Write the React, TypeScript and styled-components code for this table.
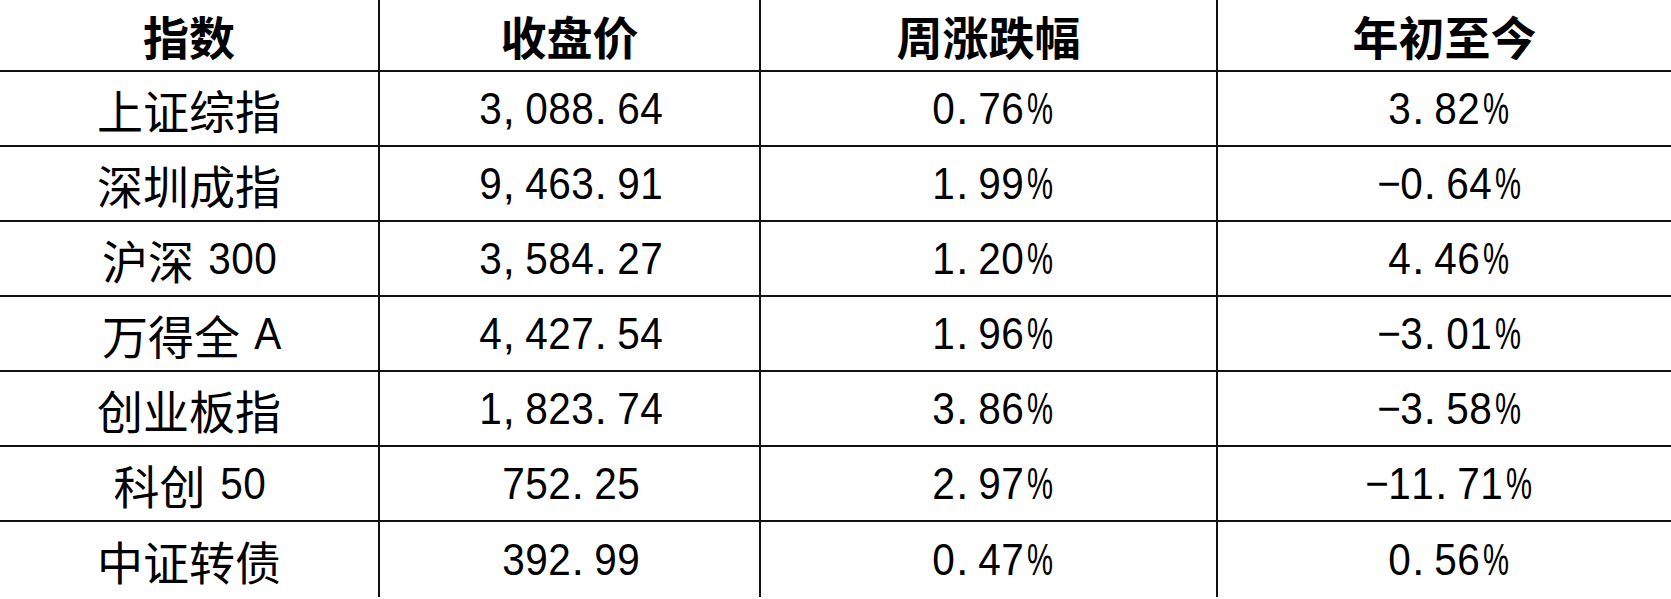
import React from 'react';
import styled, { createGlobalStyle } from 'styled-components';

const GlobalStyle = createGlobalStyle`
  html, body {
    margin: 0;
    padding: 0;
    background: #fff;
  }
  body {
    font-family: 'Noto Sans CJK SC', 'Noto Sans', sans-serif;
    color: #000;
  }
`;

const Table = styled.div`
  display: grid;
  grid-template-columns: 380px 381px 457px 1fr;
  grid-template-rows: 72px repeat(7, 75px);
  width: 1671px;
`;

interface CellProps {
  $head?: boolean;
  $lastCol?: boolean;
  $lastRow?: boolean;
}

const Cell = styled.div<CellProps>`
  display: flex;
  align-items: center;
  justify-content: center;
  box-sizing: border-box;
  border-right: ${(p) => (p.$lastCol ? 'none' : '2px solid #111')};
  border-bottom: ${(p) => (p.$lastRow ? 'none' : '2px solid #111')};
  font-size: 46px;
  font-weight: ${(p) => (p.$head ? 700 : 400)};
  line-height: 1;
  white-space: nowrap;
`;

const Han = styled.span`
  display: inline-block;
  width: 46px;
  text-align: center;
`;

type HalfKind = 'digit' | 'punct' | 'pct' | 'space';

const Half = styled.span<{ $kind: HalfKind }>`
  display: inline-block;
  width: ${(p) => (p.$kind === 'space' ? '13px' : '23px')};
  font-family: 'Liberation Sans', Arial, sans-serif;
  font-size: 45px;
  font-weight: 400;
  text-align: ${(p) => (p.$kind === 'punct' ? 'left' : 'center')};
  padding-left: ${(p) => (p.$kind === 'punct' ? '2px' : '0')};
  box-sizing: border-box;
  transform: ${(p) =>
    p.$kind === 'pct' ? 'scaleX(0.65)' : p.$kind === 'digit' ? 'scaleX(0.9)' : 'none'};
`;

const kindOf = (ch: string): HalfKind => {
  if (ch === '%') return 'pct';
  if (ch === ',' || ch === '.') return 'punct';
  if (ch === ' ') return 'space';
  return 'digit';
};

// KaiTi-style layout: CJK full width, ASCII half width
const Text: React.FC<{ value: string }> = ({ value }) => (
  <>
    {Array.from(value).map((ch, i) =>
      ch.charCodeAt(0) > 0x2e80 ? (
        <Han key={i}>{ch}</Han>
      ) : (
        <Half key={i} $kind={kindOf(ch)}>
          {ch === ' ' ? '\u00a0' : ch === '-' ? '\u2212' : ch}
        </Half>
      )
    )}
  </>
);

const header = ['指数', '收盘价', '周涨跌幅', '年初至今'];

const rows = [
  ['上证综指', '3,088.64', '0.76%', '3.82%'],
  ['深圳成指', '9,463.91', '1.99%', '-0.64%'],
  ['沪深 300', '3,584.27', '1.20%', '4.46%'],
  ['万得全 A', '4,427.54', '1.96%', '-3.01%'],
  ['创业板指', '1,823.74', '3.86%', '-3.58%'],
  ['科创 50', '752.25', '2.97%', '-11.71%'],
  ['中证转债', '392.99', '0.47%', '0.56%'],
];

const App: React.FC = () => (
  <>
    <GlobalStyle />
    <Table>
      {header.map((h, c) => (
        <Cell key={h} $head $lastCol={c === header.length - 1}>
          <Text value={h} />
        </Cell>
      ))}
      {rows.map((row, r) =>
        row.map((v, c) => (
          <Cell
            key={`${r}-${c}`}
            $lastCol={c === row.length - 1}
            $lastRow={r === rows.length - 1}
          >
            <Text value={v} />
          </Cell>
        ))
      )}
    </Table>
  </>
);

export default App;
